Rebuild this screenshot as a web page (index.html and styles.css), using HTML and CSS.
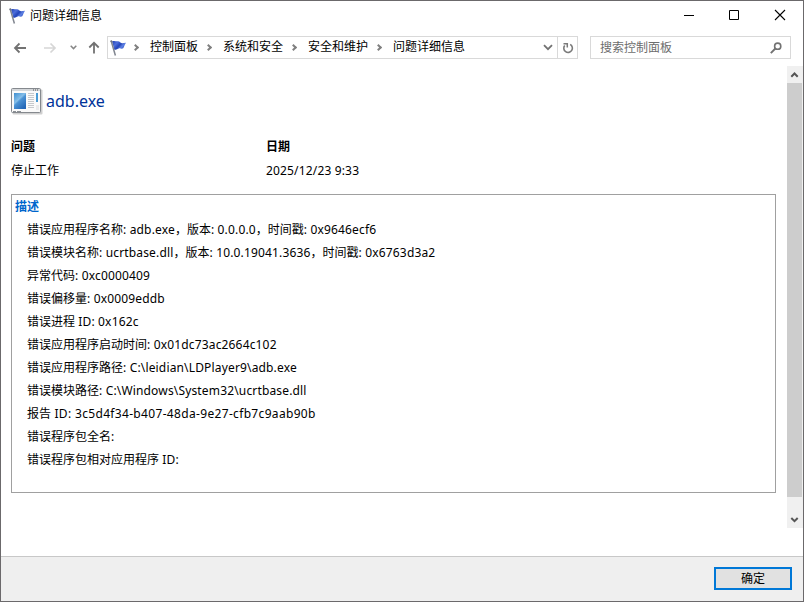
FILE: index.html
```html
<!DOCTYPE html>
<html lang="zh-CN">
  <head>
    <meta charset="utf-8">
    <title>问题详细信息</title>
    <link rel="stylesheet" href="styles.css">
  </head>
  <body>
    <svg class="defs" width="0" height="0">
      <defs>
        <linearGradient id="flagFill" x1="0" y1="0" x2="1" y2="0.6">
          <stop offset="0" stop-color="#1f3fae"/>
          <stop offset="0.35" stop-color="#4d6edb"/>
          <stop offset="0.6" stop-color="#2344b8"/>
          <stop offset="0.8" stop-color="#5f82e4"/>
          <stop offset="1" stop-color="#2b4fc4"/>
        </linearGradient>
        <linearGradient id="paneFill" x1="0" y1="0" x2="0.7" y2="1">
          <stop offset="0" stop-color="#3f8fd0"/>
          <stop offset="0.45" stop-color="#86bfe9"/>
          <stop offset="0.55" stop-color="#4c93d4"/>
          <stop offset="1" stop-color="#2468b8"/>
        </linearGradient>
        <symbol id="flag" viewBox="0 0 16 16">
          <path d="M2 1.500C4 .3 6 1.500 8 1.300C10 1.200 10 3 12 3.200C13.500 3.300 14.500 2.600 16 2.700C14.600 4.500 14.300 6.500 13.200 8.300C11.500 9.300 10.300 8 8.800 8.400C7.200 8.800 6.300 10.200 4.300 9.800Z" fill="url(#flagFill)"/>
          <path d="M1.200 1L5.400 15.500" stroke="#80858f" stroke-width="1.500"/>
          <circle cx="1.300" cy="1.300" r="1" fill="#6f7580"/>
        </symbol>
      </defs>
    </svg>

    <div class="window">
      <header class="titlebar">
        <svg class="flag" width="16" height="16"><use href="#flag"/></svg>
        <span class="title">问题详细信息</span>
        <div class="controls">
          <svg width="12" height="12" viewBox="0 0 12 12"><path d="M2 6.500H12" stroke="#000"/></svg>
          <svg width="12" height="12" viewBox="0 0 12 12"><path d="M1.500 1.500H10.500V10.500H1.500Z" fill="none" stroke="#000"/></svg>
          <svg width="12" height="12" viewBox="0 0 12 12"><path d="M1 1L11 11M11 1L1 11" stroke="#000" stroke-width="1.100"/></svg>
        </div>
      </header>

      <nav class="navbar">
        <div class="arrows">
          <svg width="14" height="12" viewBox="0 0 14 12"><path d="M13 6H2M6.500 1.500L2 6L6.500 10.500" fill="none" stroke="#727272" stroke-width="1.800"/></svg>
          <svg class="forward" width="14" height="12" viewBox="0 0 14 12"><path d="M1 6H12M7.500 1.500L12 6L7.500 10.500" fill="none" stroke="#d6d6d6" stroke-width="1.700"/></svg>
          <svg class="recent" width="7" height="5" viewBox="0 0 7 5"><path d="M.7 .8L3.500 3.600L6.300 .8" fill="none" stroke="#868686" stroke-width="1.500"/></svg>
          <svg class="up" width="12" height="13" viewBox="0 0 12 13"><path d="M6 12.500V2M1.300 6.500L6 1.800L10.700 6.500" fill="none" stroke="#727272" stroke-width="1.800"/></svg>
        </div>

        <div class="address">
          <svg class="flag" width="16" height="16"><use href="#flag"/></svg>
          <ul class="crumbs">
            <li>控制面板</li>
            <li>系统和安全</li>
            <li>安全和维护</li>
            <li>问题详细信息</li>
          </ul>
          <svg class="drop" width="10" height="7" viewBox="0 0 10 7"><path d="M1 1.200L5 5.200L9 1.200" fill="none" stroke="#727272" stroke-width="1.800"/></svg>
          <div class="refresh">
            <svg width="12" height="12" viewBox="0 0 12 12"><path d="M8.200 2.400A4.300 4.300 0 1 1 2.700 3.500" fill="none" stroke="#7a7a7a" stroke-width="1.600"/><path d="M1.500 1.700H5.300V5.500" fill="none" stroke="#7a7a7a" stroke-width="1.500"/></svg>
          </div>
        </div>

        <div class="search">
          <span>搜索控制面板</span>
          <svg width="12" height="12" viewBox="0 0 12 12"><circle cx="7.700" cy="4.200" r="3.100" fill="none" stroke="#727272" stroke-width="1.600"/><path d="M5.400 6.500L.8 11.100" stroke="#727272" stroke-width="1.900"/></svg>
        </div>
      </nav>

      <div class="view">
        <main class="content">
          <h1 class="program">
            <svg width="32" height="28" viewBox="0 0 32 28">
              <rect x="1.500" y="2.500" width="30" height="25" rx="1" fill="#d0d0d0"/>
              <rect x=".5" y="1.500" width="29" height="24" rx="1" fill="#fafafa" stroke="#85898e"/>
              <rect x="1" y="2" width="28" height="2" fill="#d4d7da"/>
              <path d="M22 3H28" stroke="#555" stroke-dasharray="1 1"/>
              <rect x="3" y="6" width="12" height="16" fill="url(#paneFill)"/>
              <path d="M17 6.500H23M17 8.500H23M17 10.500H23M17 12.500H23M17 14.500H23M17 16.500H23M17 18.500H23M17 20.500H23" stroke="#c6c9cc"/>
              <rect x="25" y="6" width="2" height="9" fill="#4a9bd5"/>
              <rect x="25" y="18" width="3" height="5" fill="#e9eaeb"/>
              <path d="M2 24.500H5M6 24.500H10" stroke="#8c9095"/>
            </svg>
            <span>adb.exe</span>
          </h1>

          <dl class="summary">
            <div>
              <dt>问题</dt>
              <dd>停止工作</dd>
            </div>
            <div>
              <dt>日期</dt>
              <dd><span class="en">2025/12/23 9:33</span></dd>
            </div>
          </dl>

          <section class="details">
            <h2>描述</h2>
            <p>错误应用程序名称<span class="en">: adb.exe</span>，版本<span class="en">: 0.0.0.0</span>，时间戳<span class="en">: 0x9646ecf6</span></p>
            <p>错误模块名称<span class="en">: ucrtbase.dll</span>，版本<span class="en">: 10.0.19041.3636</span>，时间戳<span class="en">: 0x6763d3a2</span></p>
            <p>异常代码<span class="en">: 0xc0000409</span></p>
            <p>错误偏移量<span class="en">: 0x0009eddb</span></p>
            <p>错误进程<span class="en"> ID: 0x162c</span></p>
            <p>错误应用程序启动时间<span class="en">: 0x01dc73ac2664c102</span></p>
            <p>错误应用程序路径<span class="en">: C:\leidian\LDPlayer9\adb.exe</span></p>
            <p>错误模块路径<span class="en">: C:\Windows\System32\ucrtbase.dll</span></p>
            <p>报告<span class="en guid"> ID: 3c5d4f34-b407-48da-9e27-cfb7c9aab90b</span></p>
            <p>错误程序包全名:</p>
            <p>错误程序包相对应用程序<span class="en"> ID:</span></p>
          </section>
        </main>

        <div class="scrollbar">
          <svg width="16" height="17" viewBox="0 0 16 17"><path d="M4.300 10.700L7.500 7.500L10.700 10.700" fill="none" stroke="#555" stroke-width="2"/></svg>
          <div class="thumb"></div>
          <svg width="16" height="17" viewBox="0 0 16 17"><path d="M4.300 7L7.500 10.200L10.700 7" fill="none" stroke="#555" stroke-width="2"/></svg>
        </div>
      </div>

      <footer class="footer">
        <button class="ok">确定</button>
      </footer>
    </div>
  </body>
</html>
```
FILE: styles.css
```css
* {
  box-sizing: border-box;
}

body {
  margin: 0;
  font-family: "Noto Sans", "Noto Sans CJK SC", sans-serif;
  font-size: 12px;
  line-height: 23px;
  color: #000;
}

svg {
  display: block;
  flex: none;
}

.defs {
  position: absolute;
}

.window {
  width: 804px;
  height: 602px;
  border: 1px solid #6b696b;
  background-color: #fff;
  display: flex;
  flex-direction: column;
  overflow: hidden;
}

/* Title bar */
.titlebar {
  height: 30px;
  flex: none;
  display: flex;
  align-items: center;
  padding: 0 17px 0 8px;
}

.title {
  margin: 0 0 2px 5px;
}

.controls {
  display: flex;
  gap: 34px;
  margin-left: auto;
  margin-bottom: 2px;
}

/* Navigation bar */
.navbar {
  height: 35px;
  flex: none;
  display: flex;
  align-items: flex-start;
  padding: 5px 12px 0 12px;
}

.arrows {
  width: 94px;
  height: 23px;
  display: flex;
  align-items: center;
}

.forward {
  margin-left: 16px;
}

.recent {
  margin-left: 13px;
}

.up {
  margin-left: 11px;
}

.address {
  width: 471px;
  height: 23px;
  border: 1px solid #d9d9d9;
  display: flex;
  align-items: center;
  padding-left: 2px;
}

.crumbs {
  list-style: none;
  margin: 0;
  padding: 0 0 2px 7px;
  display: flex;
  line-height: 21px;
}

.crumbs li {
  display: flex;
  align-items: center;
  margin-right: 8px;
}

.crumbs li::before {
  content: "";
  width: 3px;
  height: 3px;
  border: solid #808080;
  border-width: 2px 2px 0 0;
  transform: translateY(1px) rotate(45deg);
  margin-right: 12px;
}

.drop {
  margin-left: auto;
  margin-right: 4px;
}

.refresh {
  width: 20px;
  height: 21px;
  border-left: 1px solid #d9d9d9;
  display: flex;
  align-items: center;
  justify-content: center;
}

.search {
  width: 201px;
  height: 23px;
  margin-left: auto;
  border: 1px solid #d9d9d9;
  display: flex;
  align-items: center;
  justify-content: space-between;
  padding: 0 8px 0 9px;
  color: #6d6d6d;
}

/* Page content */
.view {
  height: 490px;
  flex: none;
  display: flex;
}

.en {
  letter-spacing: 0.16px;
}

.guid {
  letter-spacing: 0.33px;
}

.content {
  flex: 1;
  padding: 21px 11px 0 10px;
}

.program {
  margin: 0;
  height: 28px;
  display: flex;
  align-items: center;
  gap: 3px;
  color: #003399;
  font-size: 16px;
  font-weight: normal;
}

.summary {
  margin: 20px 0 0;
  display: grid;
  grid-template-columns: 255px 1fr;
  line-height: 24px;
}

.summary dt {
  font-weight: bold;
}

.summary dd {
  margin: 0;
}

.details {
  height: 299px;
  margin-top: 11px;
  border: 1px solid #a0a0a0;
  padding-left: 3px;
}

.details h2 {
  margin: 0;
  font-size: 12px;
  color: #0066cc;
}

.details p {
  margin: 0;
  padding-left: 12px;
  white-space: pre;
}

.scrollbar {
  width: 16px;
  height: 462px;
  background-color: #f0f0f0;
  display: flex;
  flex-direction: column;
}

.thumb {
  width: 15px;
  height: 414px;
  margin-bottom: 14px;
  background-color: #cdcdcd;
}

/* Footer */
.footer {
  flex: 1;
  border-top: 1px solid #c8c8c8;
  background-color: #efefef;
  display: flex;
  justify-content: flex-end;
  align-items: flex-start;
  padding: 10px 11px 0 0;
}

.ok {
  width: 78px;
  height: 23px;
  padding: 0;
  border: 2px solid #0078d7;
  background-color: #e1e1e1;
  font-family: inherit;
  font-size: 12px;
  line-height: 18px;
  color: #000;
}
```
